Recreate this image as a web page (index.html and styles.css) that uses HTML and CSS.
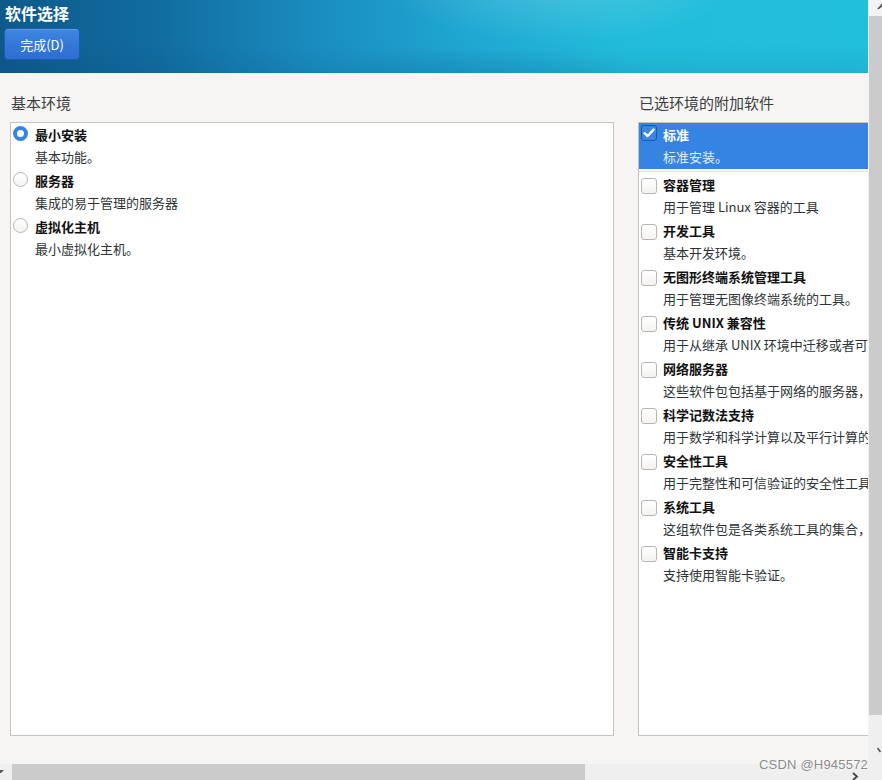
FILE: index.html
```html
<!DOCTYPE html>
<html lang="zh-CN">

<head>
	<meta charset="UTF-8">
	<meta name="viewport" content="width=device-width, initial-scale=1.0">
	<title>软件选择</title>
	<link rel="stylesheet" href="styles.css">
</head>

<body>
	<div class="window">
		<div class="top">
			<div class="main">
				<div class="header">
					<div class="header-title">软件选择</div>
					<button class="done-btn">完成(D)</button>
				</div>

				<div class="content">
					<div class="column env-column">
						<div class="section-label">基本环境</div>
						<div class="list-box">
							<div class="row">
								<span class="radio checked"></span>
								<div class="row-text">
									<div class="row-title">最小安装</div>
									<div class="row-desc">基本功能。</div>
								</div>
							</div>
							<div class="row">
								<span class="radio"></span>
								<div class="row-text">
									<div class="row-title">服务器</div>
									<div class="row-desc">集成的易于管理的服务器</div>
								</div>
							</div>
							<div class="row">
								<span class="radio"></span>
								<div class="row-text">
									<div class="row-title">虚拟化主机</div>
									<div class="row-desc">最小虚拟化主机。</div>
								</div>
							</div>
						</div>
					</div>

					<div class="column addon-column">
						<div class="section-label">已选环境的附加软件</div>
						<div class="list-box">
							<div class="row selected">
								<span class="checkbox checked">
									<svg viewBox="0 0 16 16" width="16" height="16"><path d="M3.5 8.2 L6.6 11 L12.6 4.6" fill="none" stroke="#fff" stroke-width="2.4" stroke-linecap="round" stroke-linejoin="round"/></svg>
								</span>
								<div class="row-text">
									<div class="row-title">标准</div>
									<div class="row-desc">标准安装。</div>
								</div>
							</div>
							<div class="separator"></div>
							<div class="row">
								<span class="checkbox"></span>
								<div class="row-text">
									<div class="row-title">容器管理</div>
									<div class="row-desc">用于管理 Linux 容器的工具</div>
								</div>
							</div>
							<div class="row">
								<span class="checkbox"></span>
								<div class="row-text">
									<div class="row-title">开发工具</div>
									<div class="row-desc">基本开发环境。</div>
								</div>
							</div>
							<div class="row">
								<span class="checkbox"></span>
								<div class="row-text">
									<div class="row-title">无图形终端系统管理工具</div>
									<div class="row-desc">用于管理无图像终端系统的工具。</div>
								</div>
							</div>
							<div class="row">
								<span class="checkbox"></span>
								<div class="row-text">
									<div class="row-title">传统 UNIX 兼容性</div>
									<div class="row-desc">用于从继承 UNIX 环境中迁移或者可用于该环境的兼容程序。</div>
								</div>
							</div>
							<div class="row">
								<span class="checkbox"></span>
								<div class="row-text">
									<div class="row-title">网络服务器</div>
									<div class="row-desc">这些软件包包括基于网络的服务器，例如 DHCP、Kerberos 和 NIS。</div>
								</div>
							</div>
							<div class="row">
								<span class="checkbox"></span>
								<div class="row-text">
									<div class="row-title">科学记数法支持</div>
									<div class="row-desc">用于数学和科学计算以及平行计算的工具。</div>
								</div>
							</div>
							<div class="row">
								<span class="checkbox"></span>
								<div class="row-text">
									<div class="row-title">安全性工具</div>
									<div class="row-desc">用于完整性和可信验证的安全性工具。</div>
								</div>
							</div>
							<div class="row">
								<span class="checkbox"></span>
								<div class="row-text">
									<div class="row-title">系统工具</div>
									<div class="row-desc">这组软件包是各类系统工具的集合，如：连接 SMB 共享的客户。</div>
								</div>
							</div>
							<div class="row">
								<span class="checkbox"></span>
								<div class="row-text">
									<div class="row-title">智能卡支持</div>
									<div class="row-desc">支持使用智能卡验证。</div>
								</div>
							</div>
						</div>
					</div>
				</div>
			</div>

			<div class="vscroll">
				<div class="vscroll-cap">
					<svg viewBox="0 0 14 16" width="14" height="16"><path d="M8 9 L13 3.5 L14 3.5 L14 6 L10 9 Z" fill="#555"/></svg>
				</div>
				<div class="vscroll-thumb"></div>
				<div class="vscroll-track">
					<svg viewBox="0 0 14 49" width="14" height="49"><path d="M8.5 33 L11.5 37" fill="none" stroke="#555" stroke-width="1.6"/></svg>
				</div>
			</div>
		</div>

		<div class="hscroll">
			<div class="hscroll-cap">
				<svg viewBox="0 0 12 16" width="12" height="16"><path d="M0 6 L4 6 L1 9 L0 9 Z" fill="#555"/></svg>
			</div>
			<div class="hscroll-thumb"></div>
			<div class="hscroll-track">
				<svg class="hscroll-arrow" viewBox="0 0 10 16" width="10" height="16"><path d="M3 9 L7 12.5 L3 16" fill="none" stroke="#444" stroke-width="1.8"/></svg>
			</div>
		</div>

		<div class="watermark">CSDN @H945572</div>
	</div>
</body>

</html>
```

FILE: styles.css
```css
* {
	box-sizing: border-box;
}

html,
body {
	margin: 0;
	padding: 0;
}

body {
	font-family: "Noto Sans CJK SC", "Noto Sans", sans-serif;
	font-size: 13px;
	background-color: #f6f5f4;
	color: #2e3436;
}

.window {
	position: relative;
	width: 882px;
	height: 780px;
	overflow: hidden;
}

.top {
	display: flex;
	height: 764px;
}

.main {
	width: 868px;
	overflow: hidden;
	background-color: #f6f5f4;
}

/* header bar */
.header {
	height: 73px;
	padding: 3px 0 0 4px;
	background:
		radial-gradient(ellipse 260px 90px at 560px -20px, rgba(255, 255, 255, 0.18), transparent 70%),
		radial-gradient(ellipse 300px 60px at 480px 90px, rgba(10, 80, 140, 0.25), transparent 70%),
		linear-gradient(180deg, rgba(0, 0, 0, 0) 60%, rgba(0, 40, 90, 0.08) 100%),
		linear-gradient(90deg, #0d5a8a 0%, #116c9f 18%, #1a8fc2 38%, #1fa9d2 55%, #22bcda 72%, #22bfdb 100%);
}

.header-title {
	color: #fff;
	font-size: 16px;
	font-weight: bold;
	line-height: 21px;
	padding-left: 1px;
}

.done-btn {
	display: block;
	margin-top: 4px;
	width: 76px;
	height: 32px;
	border: 1px solid #1e5cb3;
	border-radius: 4px;
	background: linear-gradient(180deg, #3f87e0 0%, #3478d9 50%, #2d6ed2 100%);
	box-shadow: inset 0 1px 0 rgba(255, 255, 255, 0.15);
	color: #fff;
	font-family: "Noto Sans CJK SC", "Noto Sans", sans-serif;
	font-size: 13px;
	padding: 0;
}

/* two lists */
.content {
	display: flex;
	gap: 24px;
	padding-left: 10px;
}

.column {
	flex: none;
}

.env-column {
	width: 604px;
}

.addon-column {
	width: 300px;
}

.section-label {
	margin-top: 20px;
	padding-left: 1px;
	font-size: 15px;
	line-height: 20px;
	color: #3a3e40;
}

.list-box {
	margin-top: 9px;
	height: 614px;
	background-color: #fff;
	border: 1px solid #c6c3bf;
	overflow: hidden;
}

.row {
	display: flex;
	height: 46px;
	padding-top: 0;
	white-space: nowrap;
}

.row-title {
	font-weight: bold;
	line-height: 23px;
	color: #111;
}

.row-desc {
	line-height: 21px;
	color: #2e3436;
}

.radio {
	flex: none;
	width: 15px;
	height: 15px;
	margin: 3px 7px 0 2px;
	border: 1px solid #bab5b0;
	border-radius: 50%;
	background: linear-gradient(180deg, #fff, #f4f3f2);
}

.radio.checked {
	border: 4px solid #3584e4;
	background: #fff;
}

.checkbox {
	flex: none;
	width: 16px;
	height: 16px;
	margin: 5px 6px 0 2px;
	border: 1px solid #bab5b0;
	border-radius: 3px;
	background: linear-gradient(180deg, #fff, #f4f3f2);
}

.checkbox svg {
	display: block;
	margin: -1px;
}

.row.selected {
	background-color: #3584e4;
}

.row.selected .checkbox {
	margin-top: 2px;
	border-color: #1b5aa8;
	background: #3a86e2;
}

.row.selected .row-title {
	color: #fff;
}

.row.selected .row-desc {
	color: #e4eefc;
}

.separator {
	height: 1px;
	margin: 2px 0 1px;
	background-color: #e3e1de;
}

/* fake scrollbars from the screenshot */
.vscroll {
	display: flex;
	flex-direction: column;
	width: 14px;
	border-left: 1px solid #f2f2f2;
}

.vscroll-cap {
	height: 16px;
	background-color: #f3f3f3;
}

.vscroll-cap svg,
.vscroll-track svg,
.hscroll-cap svg {
	display: block;
}

.vscroll-thumb {
	height: 699px;
	background-color: #cbcbcb;
}

.vscroll-track {
	flex: 1;
	background-color: #efefef;
}

.hscroll {
	display: flex;
	height: 16px;
	background-color: #efefef;
}

.hscroll-cap {
	width: 12px;
	background-color: #efefef;
}

.hscroll-thumb {
	width: 573px;
	background-color: #cbcbcb;
}

.hscroll-track {
	flex: 1;
	position: relative;
}

.hscroll-arrow {
	position: absolute;
	left: 265px;
	top: 0;
}

.watermark {
	position: absolute;
	right: 14px;
	top: 756px;
	font-family: "Liberation Sans", sans-serif;
	font-size: 13px;
	letter-spacing: 0.2px;
	line-height: 18px;
	color: #8a8a8a;
	text-shadow: 0 0 2px #fff, 0 0 1px #fff;
}
```
